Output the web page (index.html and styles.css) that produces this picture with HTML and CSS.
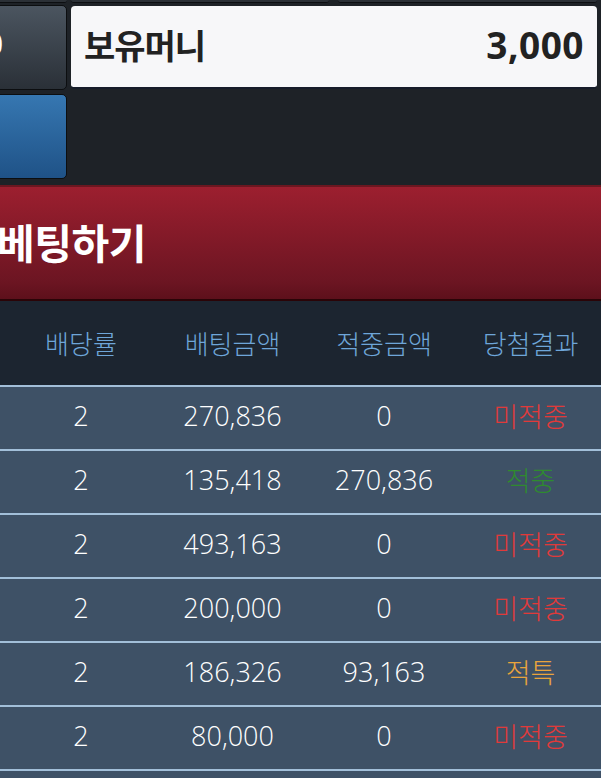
FILE: index.html
```html
<!DOCTYPE html>
<html lang="ko">
<head>
<meta charset="utf-8">
<link rel="stylesheet" href="styles.css">
</head>
<body>
<div class="page">
  <div class="prev-row">
    <div class="prev-box pb1"></div>
    <div class="prev-box pb2"></div>
    <div class="prev-box pb3"></div>
  </div>
  <div class="top">
    <div class="btn btn-gray"><span class="btn-text">0</span></div>
    <div class="money">
      <span class="money-label">보유머니</span>
      <span class="money-value">3,000</span>
    </div>
    <div class="btn btn-blue"></div>
    <div class="empty"></div>
  </div>
  <div class="bet-bar"><span class="bet-text">베팅하기</span></div>
  <div class="table">
    <div class="row head">
      <div class="cell">배당률</div>
      <div class="cell">배팅금액</div>
      <div class="cell">적중금액</div>
      <div class="cell">당첨결과</div>
    </div>
    <div class="row">
      <div class="cell">2</div><div class="cell">270,836</div><div class="cell">0</div><div class="cell lose">미적중</div>
    </div>
    <div class="row">
      <div class="cell">2</div><div class="cell">135,418</div><div class="cell">270,836</div><div class="cell win">적중</div>
    </div>
    <div class="row">
      <div class="cell">2</div><div class="cell">493,163</div><div class="cell">0</div><div class="cell lose">미적중</div>
    </div>
    <div class="row">
      <div class="cell">2</div><div class="cell">200,000</div><div class="cell">0</div><div class="cell lose">미적중</div>
    </div>
    <div class="row">
      <div class="cell">2</div><div class="cell">186,326</div><div class="cell">93,163</div><div class="cell special">적특</div>
    </div>
    <div class="row">
      <div class="cell">2</div><div class="cell">80,000</div><div class="cell">0</div><div class="cell lose">미적중</div>
    </div>
    <div class="row last">
      <div class="cell"></div><div class="cell"></div><div class="cell"></div><div class="cell"></div>
    </div>
  </div>
</div>
</body>
</html>
```
FILE: styles.css
```css
html, body {
  margin: 0;
  padding: 0;
  background: #1e2227;
  overflow: hidden;
}
body {
  width: 601px;
  height: 778px;
  font-family: "Noto Sans", "Noto Sans CJK KR", sans-serif;
}
.page {
  width: 601px;
  height: 778px;
  overflow: hidden;
}
.prev-row {
  height: 3px;
  display: flex;
  margin-left: -20px;
  gap: 4px;
}
.prev-box {
  height: 2px;
  background: #2b3036;
  border-bottom: 1px solid #0d0f12;
  border-radius: 0 0 3px 3px;
}
.pb1 { width: 87px; }
.pb2 { width: 258px; }
.pb3 { width: 259px; margin-left: 5px; }

.top {
  display: grid;
  grid-template-columns: 87px 526px;
  grid-template-rows: 85px 85px;
  column-gap: 4px;
  row-gap: 4px;
  margin-left: -20px;
  margin-top: 2px;
}
.btn {
  border: 1px solid #0c0e10;
  border-radius: 5px;
  box-sizing: border-box;
  position: relative;
  overflow: hidden;
}
.btn-gray {
  background: linear-gradient(#4b5560, #2a3037);
}
.btn-text {
  position: absolute;
  left: 5px;
  top: 18px;
  font-size: 30px;
  color: #fff;
  line-height: 40px;
}
.btn-blue {
  background: linear-gradient(#3677b1, #1f5287);
}
.money {
  margin-top: 1px;
  height: 83px;
  box-sizing: border-box;
  background: #f7f7f9;
  border-radius: 4px;
  border-bottom: 2px solid #161c2a;
  display: flex;
  align-items: center;
  justify-content: space-between;
  padding: 0 13px 0 13px;
  color: #222;
  font-weight: 700;
}
.money-label {
  font-size: 34px;
  font-family: "Noto Sans CJK KR", sans-serif;
  font-weight: 700;
  margin-top: -4px;
  letter-spacing: -1px;
}
.money-value {
  font-size: 37px;
  margin-top: -4px;
  letter-spacing: 0.5px;
}

.bet-bar {
  margin-top: 6px;
  height: 116px;
  box-sizing: border-box;
  background: linear-gradient(#9c1f2f, #6c1522 85%, #5d101b);
  border-top: 2px solid #6b1720;
  border-bottom: 2px solid #2a0407;
  display: flex;
  align-items: center;
}
.bet-text {
  font-family: "Noto Sans CJK KR", sans-serif;
  font-weight: 700;
  font-size: 41px;
  color: #fff;
  margin-left: -3px;
  margin-top: -5px;
  letter-spacing: -0.5px;
}

.table {
  display: flex;
  flex-direction: column;
}
.row {
  display: grid;
  grid-template-columns: 152px 151px 152px 1fr;
  padding-left: 5px;
  height: 62px;
  border-top: 2px solid #a2bfd9;
  background: #3e5166;
  align-items: center;
  color: #fff;
  font-size: 27px;
}
.row.head {
  height: 84px;
  border-top: none;
  background: #1c2530;
  color: #6ea6d9;
}
.cell {
  text-align: center;
  font-family: "Open Sans", "Noto Sans", sans-serif;
  font-weight: 350;
  margin-top: -5px;
}
.head .cell {
  margin-top: -2px;
  font-family: "Noto Sans CJK KR", sans-serif;
  font-weight: 300;
  font-size: 26px;
}
.lose, .win, .special {
  font-family: "Noto Sans CJK KR", sans-serif;
  font-weight: 300;
  font-size: 27px;
}
.lose { color: #e03a3a; }
.win { color: #2f8a2f; }
.special { color: #e9a43c; }
```
